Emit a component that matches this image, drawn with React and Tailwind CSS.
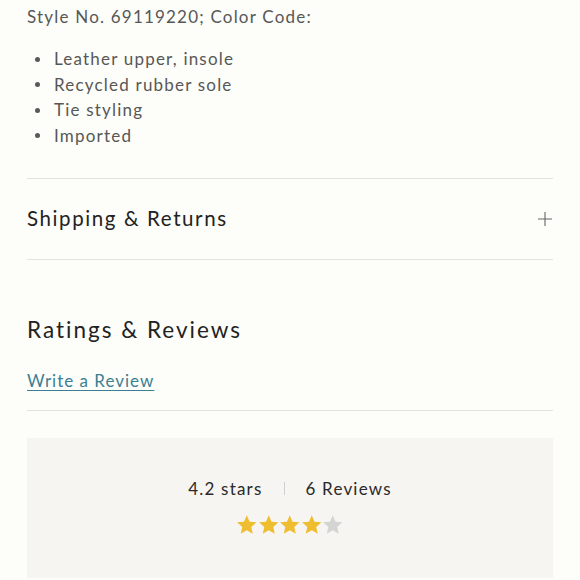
import React from 'react';

const details = ['Leather upper, insole', 'Recycled rubber sole', 'Tie styling', 'Imported'];

const Star = ({ filled }) => (
  <svg viewBox="0 0 24 24" className="w-[21.5px] h-[21.5px]" fill={filled ? '#efbd30' : '#d4d4d2'}>
    <path d="M12 1.5l3.1 7.1 7.7.7-5.8 5.1 1.7 7.6L12 18l-6.7 4 1.7-7.6L1.2 9.3l7.7-.7z" />
  </svg>
);

const App = () => {
  const rating = 4;

  return (
    <div className="min-h-[580px] bg-[#fdfdf9] px-[27px] font-['Lato','Open_Sans',sans-serif] overflow-hidden">
      <p className="pt-[5px] text-[17px] leading-[24px] tracking-[1.2px] text-[#575757]">
        Style No. 69119220; Color Code:
      </p>
      <ul className="mt-[18px] space-y-[1.6px] text-[#575757]">
        {details.map((item) => (
          <li key={item} className="flex items-center text-[17px] leading-[24px] tracking-[1.2px]">
            <span className="ml-[8px] mr-[14px] w-[5px] h-[5px] rounded-full bg-[#5a5a5a]" />
            {item}
          </li>
        ))}
      </ul>

      <div className="mt-[30px] border-t border-[#e3e3e0]" />
      <div className="flex items-center justify-between h-[80px]">
        <h3 className="text-[20.5px] tracking-[1.6px] text-[#222]">Shipping &amp; Returns</h3>
        <svg viewBox="0 0 16 16" className="w-[16px] h-[16px]" stroke="#666" strokeWidth="1.1">
          <path d="M8 1v14M1 8h14" />
        </svg>
      </div>
      <div className="border-t border-[#e3e3e0]" />

      <h2 className="mt-[55px] text-[22.5px] leading-[30px] tracking-[2px] text-[#222]">Ratings &amp; Reviews</h2>
      <a href="#" className="inline-block mt-[25px] text-[17px] leading-[22px] tracking-[1px] text-[#3b7f93] underline underline-offset-[3px]">
        Write a Review
      </a>
      <div className="mt-[17px] border-t border-[#e3e3e0]" />

      <div className="mt-[27px] h-[140px] bg-[#f6f5f2] flex flex-col items-center pt-[38px]">
        <div className="flex items-center text-[17px] tracking-[1.2px] text-[#2a2a2a]">
          <span>4.2 stars</span>
          <span className="mx-[21px] h-[13px] border-l border-[#cfcfcf]" />
          <span>6 Reviews</span>
        </div>
        <div className="flex mt-[13px]">
          {[1, 2, 3, 4, 5].map((n) => (
            <Star key={n} filled={n <= rating} />
          ))}
        </div>
      </div>
    </div>
  );
};

export default App;
